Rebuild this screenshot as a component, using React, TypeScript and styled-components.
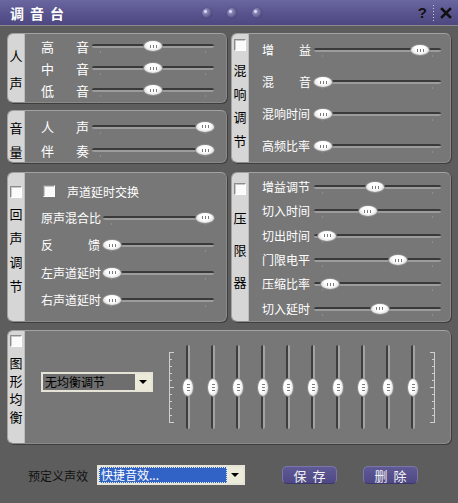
import React from "react";
import styled, { createGlobalStyle } from "styled-components";

const GlobalStyle = createGlobalStyle`
  html, body {
    margin: 0;
    background: #5d5d5d;
  }
  body {
    font-family: "Noto Sans CJK SC", "Noto Sans", sans-serif;
  }
  * {
    box-sizing: border-box;
  }
`;

type Row = { label: string[]; value: number };

const voiceRows: Row[] = [
  { label: ["高", "音"], value: 0.5 },
  { label: ["中", "音"], value: 0.5 },
  { label: ["低", "音"], value: 0.5 },
];

const volumeRows: Row[] = [
  { label: ["人", "声"], value: 1 },
  { label: ["伴", "奏"], value: 1 },
];

const reverbRows: Row[] = [
  { label: ["增", "益"], value: 0.89 },
  { label: ["混", "音"], value: 0 },
  { label: ["混响时间"], value: 0 },
  { label: ["高频比率"], value: 0 },
];

const echoRows: Row[] = [
  { label: ["原声混合比"], value: 1 },
  { label: ["反", "馈"], value: 0 },
  { label: ["左声道延时"], value: 0 },
  { label: ["右声道延时"], value: 0 },
];

const limiterRows: Row[] = [
  { label: ["增益调节"], value: 0.48 },
  { label: ["切入时间"], value: 0.41 },
  { label: ["切出时间"], value: 0.04 },
  { label: ["门限电平"], value: 0.69 },
  { label: ["压缩比率"], value: 0.065 },
  { label: ["切入延时"], value: 0.52 },
];

const eqBands = [0.5, 0.5, 0.5, 0.5, 0.5, 0.5, 0.5, 0.5, 0.5, 0.5];

export default function App() {
  return (
    <>
      <GlobalStyle />
      <Window>
        <TitleBar>
          <Title>调音台</Title>
          <Dots>
            <Dot />
            <Dot />
            <Dot />
          </Dots>
          <TitleTools>
            <Help>?</Help>
            <Divider />
            <svg width="12" height="12" viewBox="0 0 12 12">
              <path d="M2 2 L10 10 M10 2 L2 10" stroke="#111" strokeWidth="2.6" strokeLinecap="square" />
            </svg>
          </TitleTools>
        </TitleBar>

        <Body>
          <TopGrid>
            <Column>
              <Panel $h={70}>
                <Strip $pt={15}>
                  <CharList $gap={14}>
                    <span>人</span>
                    <span>声</span>
                  </CharList>
                </Strip>
                <Content $pt={1} $pl={16} $pr={12}>
                  {voiceRows.map((r, i) => (
                    <SliderRow key={i} row={r} h={22} labelW={51} size={13} />
                  ))}
                </Content>
              </Panel>
              <Panel $h={53}>
                <Strip $pt={10}>
                  <CharList $gap={11}>
                    <span>音</span>
                    <span>量</span>
                  </CharList>
                </Strip>
                <Content $pt={4} $pl={16} $pr={12}>
                  {volumeRows.map((r, i) => (
                    <SliderRow key={i} row={r} h={24} labelW={51} size={13} />
                  ))}
                </Content>
              </Panel>
            </Column>

            <Panel $h={130}>
              <Strip $pt={5}>
                <Check />
                <CharList $mt={12} $gap={10.5}>
                  <span>混</span>
                  <span>响</span>
                  <span>调</span>
                  <span>节</span>
                </CharList>
              </Strip>
              <Content $pt={0} $pl={13} $pr={9}>
                {reverbRows.map((r, i) => (
                  <SliderRow key={i} row={r} h={32} labelW={52} size={12} />
                ))}
              </Content>
            </Panel>

            <Panel $h={150}>
              <Strip $pt={13}>
                <Check />
                <CharList $mt={9} $gap={11}>
                  <span>回</span>
                  <span>声</span>
                  <span>调</span>
                  <span>节</span>
                </CharList>
              </Strip>
              <Content $pt={8} $pl={16} $pr={12}>
                <SwapRow>
                  <Check />
                  <span>声道延时交换</span>
                </SwapRow>
                <RowGroup $mt={3}>
                  {echoRows.map((r, i) => (
                    <SliderRow key={i} row={r} h={27.5} labelW={62} size={12} />
                  ))}
                </RowGroup>
              </Content>
            </Panel>

            <Panel $h={150}>
              <Strip $pt={10}>
                <Check />
                <CharList $mt={16} $gap={19}>
                  <span>压</span>
                  <span>限</span>
                  <span>器</span>
                </CharList>
              </Strip>
              <Content $pt={2} $pl={13} $pr={9}>
                {limiterRows.map((r, i) => (
                  <SliderRow key={i} row={r} h={24.4} labelW={52} size={12} />
                ))}
              </Content>
            </Panel>
          </TopGrid>

          <Panel $h={114} $mt={8}>
            <Strip $pt={4}>
              <Check />
              <CharList $mt={9} $gap={5}>
                <span>图</span>
                <span>形</span>
                <span>均</span>
                <span>衡</span>
              </CharList>
            </Strip>
            <EqContent>
              <Select $w={112} $dark>
                <SelectText>无均衡调节</SelectText>
                <SelectButton>
                  <Arrow />
                </SelectButton>
              </Select>
              <Scale side="left" />
              <Bands>
                {eqBands.map((v, i) => (
                  <VSlider key={i}>
                    <VTrack />
                    <VThumb style={{ top: `${(1 - v) * 67}px` }}>
                      <VGrip />
                    </VThumb>
                  </VSlider>
                ))}
              </Bands>
              <Scale side="right" />
            </EqContent>
          </Panel>
        </Body>

        <Footer>
          <FooterLabel>预定义声效</FooterLabel>
          <Select $w={148}>
            <SelectText $selected>快捷音效...</SelectText>
            <SelectButton>
              <Arrow />
            </SelectButton>
          </Select>
          <PurpleButton $ml={37}>保存</PurpleButton>
          <PurpleButton $ml={26}>删除</PurpleButton>
        </Footer>
      </Window>
    </>
  );
}

function SliderRow({
  row,
  h,
  labelW,
  size,
}: {
  row: Row;
  h: number;
  labelW: number;
  size: number;
}) {
  return (
    <RowBox $h={h}>
      <Label $w={labelW} $size={size}>
        {row.label.map((c, i) => (
          <span key={i}>{c}</span>
        ))}
      </Label>
      <SliderArea>
        <Track />
        <Thumb style={{ left: `calc((100% - 18px) * ${row.value})` }}>
          <Grip />
        </Thumb>
      </SliderArea>
    </RowBox>
  );
}

function Scale({ side }: { side: "left" | "right" }) {
  const ticks = Array.from({ length: 11 }, (_, i) => 1 + i * 7);
  const lineX = side === "left" ? 0.5 : 5.5;
  return (
    <ScaleBox $side={side}>
      <svg width="6" height="72" viewBox="0 0 6 72">
        <line x1={lineX} y1="1" x2={lineX} y2="71" stroke="#cfcfcf" strokeWidth="1" />
        {ticks.map((y, i) => {
          const long = i === 0 || i === 5 || i === 10;
          const len = long ? 5 : 3;
          return side === "left" ? (
            <line key={i} x1="0" y1={y + 0.5} x2={len} y2={y + 0.5} stroke="#cfcfcf" strokeWidth="1" />
          ) : (
            <line key={i} x1={6 - len} y1={y + 0.5} x2="6" y2={y + 0.5} stroke="#cfcfcf" strokeWidth="1" />
          );
        })}
      </svg>
    </ScaleBox>
  );
}

const Window = styled.div`
  width: 458px;
  height: 503px;
  background: #5d5d5d;
  display: flex;
  flex-direction: column;
  overflow: hidden;
`;

const TitleBar = styled.div`
  height: 26px;
  flex-shrink: 0;
  display: grid;
  grid-template-columns: 1fr auto 1fr;
  align-items: center;
  padding: 0 6px 0 10px;
  background: linear-gradient(#6a66a0, #57528b 60%, #4d4880);
  border-bottom: 1px solid #8a8a8e;
`;

const Title = styled.div`
  color: #fff;
  font-weight: bold;
  font-size: 14px;
  letter-spacing: 6px;
  line-height: 1;
`;

const Dots = styled.div`
  display: flex;
  gap: 15px;
  padding-left: 2px;
`;

const Dot = styled.div`
  width: 10px;
  height: 10px;
  border-radius: 50%;
  background: radial-gradient(circle at 35% 35%, #d8d8f0 0 1px, #8c89ba 2px, #4a4678 80%);
  box-shadow: 0 0 1px #2e2b55;
`;

const TitleTools = styled.div`
  display: flex;
  justify-content: flex-end;
  align-items: center;
  gap: 6px;
`;

const Help = styled.span`
  color: #111;
  font-family: "Liberation Sans", Arial, sans-serif;
  font-weight: bold;
  font-size: 15px;
  line-height: 1;
`;

const Divider = styled.span`
  width: 1px;
  height: 16px;
  background: repeating-linear-gradient(#c9c7e4 0 1px, transparent 1px 3px);
`;

const Body = styled.div`
  padding: 7px 7px 0;
  display: flex;
  flex-direction: column;
`;

const TopGrid = styled.div`
  display: grid;
  grid-template-columns: 220px 220px;
  column-gap: 4px;
  row-gap: 9px;
`;

const Column = styled.div`
  display: flex;
  flex-direction: column;
  gap: 7px;
`;

const Panel = styled.div<{ $h: number; $mt?: number }>`
  height: ${(p) => p.$h}px;
  margin-top: ${(p) => p.$mt ?? 0}px;
  display: flex;
  background: #777777;
  border: 1px solid #a2a2a2;
  border-right-color: #8a8a8a;
  border-bottom-color: #8a8a8a;
  border-radius: 6px;
  box-shadow: 1px 1px 0 #3e3e3e;
  overflow: hidden;
`;

const Strip = styled.div<{ $pt: number }>`
  width: 17px;
  flex-shrink: 0;
  background: #d6d6d6;
  display: flex;
  flex-direction: column;
  align-items: center;
  padding-top: ${(p) => p.$pt}px;
  border-right: 1px solid #bcbcbc;
`;

const CharList = styled.div<{ $gap: number; $mt?: number }>`
  display: flex;
  flex-direction: column;
  align-items: center;
  gap: ${(p) => p.$gap}px;
  margin-top: ${(p) => p.$mt ?? 0}px;
  font-size: 13px;
  line-height: 13px;
  color: #000;
`;

const Check = styled.div`
  width: 12px;
  height: 12px;
  flex-shrink: 0;
  background: #fbfbfb;
  border: 1px solid;
  border-color: #8c8c8c #ffffff #ffffff #8c8c8c;
  box-shadow: inset 1px 1px 0 #c8c8c8;
`;

const Content = styled.div<{ $pt: number; $pl: number; $pr: number }>`
  flex: 1;
  display: flex;
  flex-direction: column;
  padding: ${(p) => p.$pt}px ${(p) => p.$pr}px 0 ${(p) => p.$pl}px;
`;

const RowGroup = styled.div<{ $mt: number }>`
  display: flex;
  flex-direction: column;
  margin-top: ${(p) => p.$mt}px;
`;

const SwapRow = styled.div`
  height: 20px;
  display: flex;
  align-items: center;
  gap: 12px;
  padding-left: 2px;
  color: #fff;
  font-size: 12px;
`;

const RowBox = styled.div<{ $h: number }>`
  height: ${(p) => p.$h}px;
  display: flex;
  align-items: center;
`;

const Label = styled.div<{ $w: number; $size: number }>`
  width: ${(p) => p.$w}px;
  flex-shrink: 0;
  display: flex;
  justify-content: space-between;
  padding-right: 3px;
  color: #fff;
  font-size: ${(p) => p.$size}px;
  line-height: 1;
  white-space: nowrap;
`;

const SliderArea = styled.div`
  position: relative;
  flex: 1;
  height: 12px;
`;

const Track = styled.div`
  position: absolute;
  left: 0;
  right: 0;
  top: 4px;
  height: 4px;
  border-radius: 2px;
  background: linear-gradient(#3a3a3a 0 2px, #9c9c9c 2px);

  &::before,
  &::after {
    content: "";
    position: absolute;
    top: 7px;
    width: 1px;
    height: 2px;
    background: #8e8e8e;
  }
  &::before {
    left: 8px;
  }
  &::after {
    right: 8px;
  }
`;

const Thumb = styled.div`
  position: absolute;
  top: 1px;
  width: 18px;
  height: 10px;
  border-radius: 50%;
  background: radial-gradient(ellipse at 50% 35%, #ffffff 40%, #c9c9c9 100%);
  box-shadow: 0 0 0 1px #8d8d8d;
  display: flex;
  align-items: center;
  justify-content: center;
`;

const Grip = styled.span`
  width: 7px;
  height: 3px;
  background: repeating-linear-gradient(90deg, #7a7a7a 0 1px, transparent 1px 3px);
`;

const EqContent = styled.div`
  flex: 1;
  display: flex;
  align-items: center;
  padding-left: 16px;
`;

const Select = styled.div<{ $w: number; $dark?: boolean }>`
  width: ${(p) => p.$w}px;
  height: 20px;
  display: flex;
  flex-shrink: 0;
  border: 2px solid #e6e4d6;
  background: ${(p) => (p.$dark ? "#6e6e6e" : "#e6e4d6")};
  margin-top: ${(p) => (p.$dark ? -10 : 0)}px;
`;

const SelectText = styled.div<{ $selected?: boolean }>`
  flex: 1;
  min-width: 0;
  padding-left: 2px;
  font-size: 12px;
  line-height: 16px;
  white-space: nowrap;
  color: ${(p) => (p.$selected ? "#fff" : "#000")};
  background: ${(p) => (p.$selected ? "#3163c6" : "transparent")};
  outline: ${(p) => (p.$selected ? "1px dotted #e8e8e8" : "none")};
  outline-offset: -1px;
`;

const SelectButton = styled.div`
  width: 16px;
  flex-shrink: 0;
  background: #ecead8;
  display: flex;
  align-items: center;
  justify-content: center;
`;

const Arrow = styled.span`
  width: 0;
  height: 0;
  border-left: 4px solid transparent;
  border-right: 4px solid transparent;
  border-top: 4px solid #000;
`;

const ScaleBox = styled.div<{ $side: "left" | "right" }>`
  display: flex;
  margin-left: ${(p) => (p.$side === "left" ? 16 : 10)}px;
  margin-right: ${(p) => (p.$side === "left" ? 7 : 0)}px;
`;

const Bands = styled.div`
  display: flex;
  gap: 13px;
`;

const VSlider = styled.div`
  position: relative;
  width: 12px;
  height: 84px;
`;

const VTrack = styled.div`
  position: absolute;
  left: 4px;
  top: 0;
  bottom: 0;
  width: 4px;
  border-radius: 2px;
  background: linear-gradient(90deg, #3e3e3e 0 2px, #a2a2a2 2px);
`;

const VThumb = styled.div`
  position: absolute;
  left: 1px;
  width: 10px;
  height: 17px;
  border-radius: 50%;
  background: radial-gradient(ellipse at 40% 45%, #ffffff 40%, #c4c4c4 100%);
  box-shadow: 0 0 0 1px #8d8d8d;
  display: flex;
  align-items: center;
  justify-content: center;
`;

const VGrip = styled.span`
  width: 3px;
  height: 7px;
  background: repeating-linear-gradient(#7a7a7a 0 1px, transparent 1px 3px);
`;

const Footer = styled.div`
  flex: 1;
  display: flex;
  align-items: center;
  padding: 3px 0 0 28px;
`;

const FooterLabel = styled.div`
  font-size: 12px;
  color: #111;
  margin-right: 9px;
  white-space: nowrap;
`;

const PurpleButton = styled.div<{ $ml: number }>`
  margin-left: ${(p) => p.$ml}px;
  width: 55px;
  height: 18px;
  display: flex;
  align-items: center;
  justify-content: center;
  padding-left: 6px;
  border-radius: 5px;
  background: linear-gradient(#5f5a96, #4e4985);
  border: 1px solid #7a76ac;
  border-bottom-color: #3b3768;
  color: #f2f2f2;
  font-size: 13px;
  letter-spacing: 6px;
  line-height: 1;
`;
